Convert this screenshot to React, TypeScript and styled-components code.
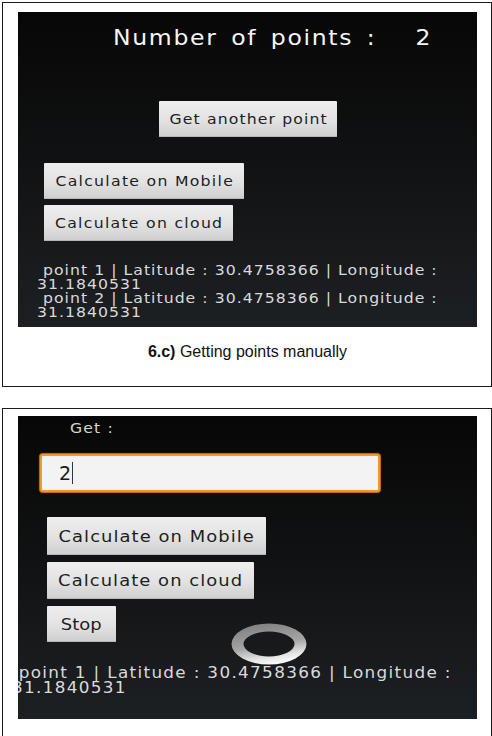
import React from "react";
import styled, { createGlobalStyle } from "styled-components";

const Global = createGlobalStyle`
  html, body {
    margin: 0;
    padding: 0;
    background: #ffffff;
  }
  body {
    font-family: "DejaVu Sans", "Open Sans", sans-serif;
  }
`;

const Page = styled.div`
  display: flex;
  flex-direction: column;
  gap: 21px;
  padding: 2px 0 0 2px;
`;

const Figure = styled.div<{ $top: number; $bottom: number }>`
  display: flex;
  flex-direction: column;
  border: 1px solid #1b1b1b;
  padding: ${(p) => p.$top}px 14px ${(p) => p.$bottom}px 15px;
`;

const Screen = styled.div<{ $height: number }>`
  position: relative;
  display: flex;
  flex-direction: column;
  align-items: flex-start;
  height: ${(p) => p.$height}px;
  overflow: hidden;
  background: linear-gradient(180deg, #070707 0%, #101112 45%, #1d2023 100%);
  color: #ececec;
`;

/* the device font is wide: glyphs are stretched a little, then tracked */
const Wide = styled.span<{ $ls: number; $origin?: string }>`
  display: inline-block;
  letter-spacing: ${(p) => p.$ls}px;
  margin-right: ${(p) => -p.$ls}px;
  transform: scaleX(1.12);
  transform-origin: ${(p) => p.$origin ?? "left"} center;
`;

const Caption = styled.div`
  font-family: "Liberation Sans", Arial, sans-serif;
  font-size: 16px;
  line-height: 18px;
  color: #111;
  text-align: center;
  margin-top: 16px;
  b {
    font-weight: bold;
  }
`;

const Title = styled.div`
  display: flex;
  justify-content: space-between;
  width: 317px;
  margin: 12px 0 0 95px;
  font-size: 21px;
  line-height: 28px;
  word-spacing: 4px;
  color: #f6f6f6;
`;

const Label = styled.div`
  margin: 3px 0 0 52px;
  font-size: 14px;
  line-height: 18px;
  color: #d4d4d4;
`;

const AndroidButton = styled.button<{ $left: number; $top: number; $w: number; $h: number; $size: number }>`
  display: flex;
  align-items: center;
  justify-content: center;
  width: ${(p) => p.$w}px;
  height: ${(p) => p.$h}px;
  margin: ${(p) => p.$top}px 0 0 ${(p) => p.$left}px;
  padding: 0;
  border: none;
  border-radius: 1px;
  background: linear-gradient(180deg, #eeeeee 0%, #e2e2e2 55%, #cecece 100%);
  box-shadow: inset 0 -1px 0 #b6b6b6;
  font-family: "DejaVu Sans", "Open Sans", sans-serif;
  font-size: ${(p) => p.$size}px;
  color: #1e1e1e;
`;

const InputBox = styled.div`
  display: flex;
  align-items: center;
  box-sizing: border-box;
  width: 340px;
  height: 38px;
  margin: 17px 0 0 22px;
  padding-left: 17px;
  background: #f3f3f3;
  border: 2px solid #f3962c;
  border-radius: 3px;
  box-shadow: 0 0 1px 1px #c9741e;
  font-size: 19px;
  color: #1a1a1a;
`;

const Caret = styled.span`
  display: inline-block;
  width: 1px;
  height: 22px;
  margin-left: 1px;
  background: #333;
`;

const Points = styled.div<{ $left: number; $top: number; $size: number; $lh: number }>`
  margin: ${(p) => p.$top}px 0 0 ${(p) => p.$left}px;
  font-size: ${(p) => p.$size}px;
  line-height: ${(p) => p.$lh}px;
  color: #dadada;
  white-space: pre;
`;

/* indeterminate progress ring, drawn over the list */
const Spinner = styled.svg`
  position: absolute;
  left: 212px;
  top: 206px;
`;

const points = [
  { lat: "30.4758366", lng: "31.1840531" },
  { lat: "30.4758366", lng: "31.1840531" },
];

const pointLines = (items: typeof points) =>
  items.map((p, i) => ` point ${i + 1} | Latitude : ${p.lat} | Longitude :\n${p.lng}`).join("\n");

export default function App() {
  return (
    <>
      <Global />
      <Page>
        <Figure $top={9} $bottom={25}>
          <Screen $height={315}>
            <Title>
              <Wide $ls={1.5}>Number of points :</Wide>
              <Wide $ls={0} $origin="right">2</Wide>
            </Title>
            <AndroidButton $left={141} $top={49} $w={178} $h={36} $size={14}>
              <Wide $ls={1} $origin="center">Get another point</Wide>
            </AndroidButton>
            <AndroidButton $left={26} $top={26} $w={200} $h={36} $size={14}>
              <Wide $ls={1.15} $origin="center">Calculate on Mobile</Wide>
            </AndroidButton>
            <AndroidButton $left={26} $top={6} $w={189} $h={36} $size={14}>
              <Wide $ls={1.15} $origin="center">Calculate on cloud</Wide>
            </AndroidButton>
            <Points $left={19} $top={22} $size={14} $lh={14}>
              <Wide $ls={0.92}>{pointLines(points)}</Wide>
            </Points>
          </Screen>
          <Caption>
            <b>6.c)</b> Getting points manually
          </Caption>
        </Figure>
        <Figure $top={7} $bottom={30}>
          <Screen $height={303}>
            <Label>
              <Wide $ls={1}>Get :</Wide>
            </Label>
            <InputBox>
              2<Caret />
            </InputBox>
            <AndroidButton $left={29} $top={25} $w={219} $h={38} $size={16}>
              <Wide $ls={0.95} $origin="center">Calculate on Mobile</Wide>
            </AndroidButton>
            <AndroidButton $left={29} $top={7} $w={207} $h={37} $size={16}>
              <Wide $ls={0.95} $origin="center">Calculate on cloud</Wide>
            </AndroidButton>
            <AndroidButton $left={29} $top={7} $w={69} $h={36} $size={16}>
              <Wide $ls={0} $origin="center">Stop</Wide>
            </AndroidButton>
            <Points $left={-6} $top={24} $size={15} $lh={15}>
              <Wide $ls={1.19}>{pointLines(points.slice(0, 1))}</Wide>
            </Points>
            <Spinner width="78" height="44" viewBox="0 0 78 44">
              <defs>
                <linearGradient id="ring" x1="0.2" y1="0" x2="0.5" y2="1">
                  <stop offset="0" stopColor="#7e7e7e" />
                  <stop offset="0.55" stopColor="#a4a4a4" />
                  <stop offset="0.85" stopColor="#e6e6e6" />
                  <stop offset="1" stopColor="#fbfbfb" />
                </linearGradient>
              </defs>
              <path
                fillRule="evenodd"
                fill="url(#ring)"
                d="M1.5 22a37.5 20.5 0 1 0 75 0a37.5 20.5 0 1 0 -75 0Z M13.5 22a25.5 12.5 0 1 0 51 0a25.5 12.5 0 1 0 -51 0Z"
              />
            </Spinner>
          </Screen>
        </Figure>
      </Page>
    </>
  );
}
